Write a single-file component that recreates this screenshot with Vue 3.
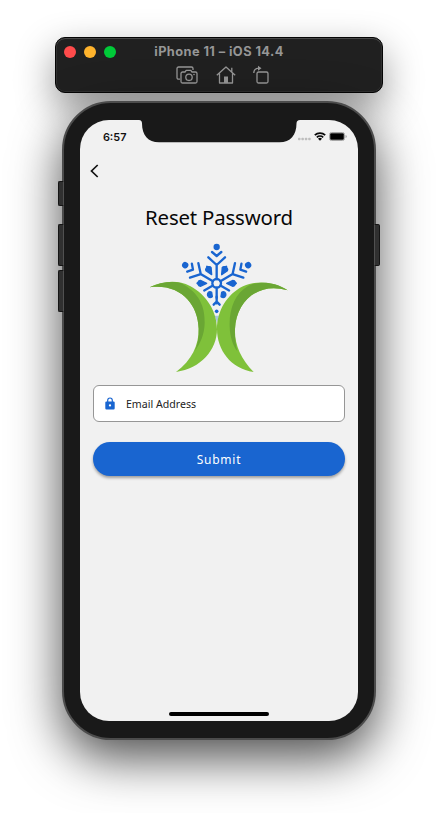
<script setup>
import { ref } from 'vue'

const email = ref('')
const sideArms = [-60, 0, 60]
const shortArms = [-60, 0, 60]
const petals = [30, -30, 90, -90]
</script>

<template>
  <main class="desktop">
    <header class="toolbar">
      <div class="title-row">
        <div class="lights">
          <span class="light red"></span>
          <span class="light amber"></span>
          <span class="light green"></span>
        </div>
        <h1 class="window-title">iPhone 11 – iOS 14.4</h1>
      </div>
      <div class="tools">
        <svg class="tool camera" viewBox="0 0 22 18" width="22" height="18">
          <path d="M4 13.200H2.500A1.500 1.500 0 0 1 1 11.700V2.500A1.500 1.500 0 0 1 2.500 1H15.500A1.500 1.500 0 0 1 17 2.500V4" />
          <path d="M6.500 6H9l1.200-1.600h4.600L16 6h3.500A1.500 1.500 0 0 1 21 7.500v8a1.500 1.500 0 0 1-1.500 1.500h-13A1.500 1.500 0 0 1 5 15.500v-8A1.500 1.500 0 0 1 6.500 6Z" />
          <circle cx="13" cy="11.300" r="3.200" />
          <circle class="solid" cx="18" cy="8.500" r=".8" />
        </svg>
        <svg class="tool home" viewBox="0 0 20 18" width="20" height="18">
          <path d="M.8 9.300 10 1l9.200 8.300M3.500 7.500V17h13V7.500M15.800 6V1.800" />
          <path class="solid" d="M8 10.500h4V17H8z" />
        </svg>
        <svg class="tool rotate" viewBox="0 0 16 18" width="16" height="18">
          <rect x="4" y="6" width="11" height="11" rx="1.500" />
          <path d="M.8 7C.8 4 2.500 2.200 6.500 2.200" />
          <path class="solid" d="M5-.2 8.500 2.300 5 4.800z" />
        </svg>
      </div>
    </header>

    <section class="phone">
      <span class="side mute"></span>
      <span class="side volume-up"></span>
      <span class="side volume-down"></span>
      <span class="side power"></span>

      <div class="screen">
        <svg class="notch" viewBox="0 0 161 23" width="161" height="23">
          <path d="M0 0H161Q157.500 0 157.500 3.500C157.500 15 151.500 22.300 140.500 22.300H20C9 22.300 3 15 3 3.500Q3 0 0 0Z" />
        </svg>

        <div class="status">
          <span class="time">6:57</span>
          <div class="indicators">
            <svg class="signal" viewBox="0 0 13 9" width="13" height="9">
              <rect v-for="n in 4" :key="n" :x="(n - 1) * 3.4" y="5.8" width="2.5" height="2.5" rx=".8" />
            </svg>
            <svg class="wifi" viewBox="0 0 12 9" width="12" height="9">
              <path d="M.8 3.200a7.500 7.500 0 0 1 10.400 0M2.800 5.300a4.700 4.700 0 0 1 6.400 0" />
              <path class="wifi-dot" d="M4 6.700a3 3 0 0 1 4 0L6 8.800z" />
            </svg>
            <svg class="battery" viewBox="0 0 18 9" width="18" height="9">
              <rect class="battery-shell" x=".5" y=".5" width="15" height="8" rx="2" />
              <rect x="1.200" y="1.200" width="13.600" height="6.600" rx="1" />
              <path class="battery-cap" d="M16.500 3q1.300 .3 1.300 1.500t-1.300 1.500z" />
            </svg>
          </div>
        </div>

        <button class="back" aria-label="Back">
          <svg viewBox="0 0 9 14" width="9" height="14"><path d="M7.700 1 1.500 7l6.200 6" /></svg>
        </button>

        <h2 class="heading">Reset Password</h2>

        <svg class="logo" viewBox="0 0 480 435" width="160" height="145">
          <g class="flake" transform="translate(230 145)">
            <circle r="13" />
            <g v-for="angle in sideArms" :key="'a' + angle" :transform="`rotate(${angle})`">
              <path d="M0-13V-57M-25-78 0-55 25-78M-14-94 0-82 14-94" />
              <circle class="fill" cy="-109" r="9.500" />
            </g>
            <g v-for="angle in shortArms" :key="'s' + angle" :transform="`rotate(${angle})`">
              <path d="M0 13V43" />
            </g>
            <path d="M0 40V60M-9 64 0 55 9 64" />
            <path
              v-for="angle in petals"
              :key="'p' + angle"
              class="petal"
              :transform="`rotate(${angle})`"
              d="M0-30-9-49Q-9-54-3-56L0-59 3-56Q9-54 9-49Z"
            />
            <path class="petal" d="M-15 27-13 40Q-20 45-25 40-30 34-25 27-20 23-15 27ZM15 27 13 40Q20 45 25 40 30 34 25 27 20 23 15 27Z" />
            <circle class="fill" cy="84" r="5.500" />
          </g>
          <path class="pale" d="M224 242h13l-6 23z" />
          <path class="leaf" d="M29 157C64 139 112 133 150 153C201 180 231 230 231 283C231 344 183 401 108 411C155 376 177 330 176 281C174 207 121 145 29 157Z" />
          <path class="leaf-shade" d="M29 157C60 141 98 137 122 144C179 173 195 216 194 264C193 299 181 325 165 347C174 326 177 304 176 281C174 207 121 145 29 157Z" />
          <path class="leaf" d="M443 166C407 142 352 134 309 154C260 178 231 229 231 283C231 344 272 402 341 411C302 370 283 327 285 282C288 202 352 139 443 166Z" />
          <path class="leaf-shade" d="M443 166C404 139 356 138 325 152C284 176 267 222 269 275C270 305 279 332 292 348C286 327 284 303 285 282C288 202 352 139 443 166Z" />
        </svg>

        <label class="field">
          <svg viewBox="0 0 10 13" width="10" height="13">
            <path class="shackle" d="M2.700 5V3.300a2.300 2.300 0 0 1 4.600 0V5" />
            <path d="M1.400 4.500h7.200q1.100 0 1.100 1.100v5.600q0 1.200-1.100 1.200H1.400Q.3 12.400.3 11.200V5.600q0-1.100 1.100-1.100Z" />
            <circle class="keyhole" cx="5" cy="8.400" r="1.150" />
          </svg>
          <input v-model="email" type="email" placeholder="Email Address" />
        </label>

        <button class="submit">Submit</button>
        <span class="home-bar"></span>
      </div>
    </section>
  </main>
</template>

<style>
body {
  margin: 0;
  background: #fff;
}
</style>

<style scoped>
.desktop {
  display: flex;
  flex-direction: column;
  align-items: center;
  box-sizing: border-box;
  width: 438px;
  height: 813px;
  padding-top: 37px;
  gap: 8px;
  overflow: hidden;
  background: #fff;
}

.toolbar {
  box-sizing: border-box;
  width: 328px;
  height: 56px;
  flex: none;
  padding-top: 5px;
  border: 1px solid #050505;
  border-radius: 10px;
  background: #202020;
  box-shadow: inset 0 1px 0 #484848, inset 0 0 0 1px #303030, 0 15px 38px rgba(0, 0, 0, 0.42);
}

.title-row {
  display: grid;
  grid-template-columns: 84px 1fr 84px;
  align-items: center;
  height: 17px;
}

.lights {
  display: flex;
  gap: 8px;
  padding-left: 8px;
}

.light {
  width: 12px;
  height: 12px;
  border-radius: 50%;
}

.red { background: #ff4b4b; }
.amber { background: #ffb32c; }
.green { background: #00ca38; }

.window-title {
  margin: 0;
  color: #969696;
  font: 700 12.8px/16px Inter, sans-serif;
  letter-spacing: 0.42px;
  text-align: center;
  white-space: nowrap;
}

.tools {
  display: flex;
  align-items: center;
  padding: 6px 0 0 120px;
}

.tool {
  fill: none;
  stroke: #969696;
  stroke-width: 1.3;
  stroke-linejoin: round;
  overflow: visible;
}

.tool .solid {
  fill: #969696;
  stroke: none;
}

.camera { margin-left: -0.5px; }
.home { margin-left: 18px; }
.rotate { margin-left: 17px; }

.phone {
  position: relative;
  box-sizing: border-box;
  width: 314px;
  height: 639px;
  flex: none;
  padding: 17px 16px;
  border: 2px solid #4c4c4c;
  border-radius: 49px;
  background: #191919;
  box-shadow: 0 18px 50px rgba(0, 0, 0, 0.7);
}

.side {
  position: absolute;
  left: -6px;
  box-sizing: border-box;
  width: 6px;
  border: 1px solid #151515;
  border-right-color: #505050;
  border-radius: 2px 0 0 2px;
  background: #303030;
}

.mute { top: 78px; height: 25px; }
.volume-up { top: 121px; height: 42px; }
.volume-down { top: 167px; height: 42px; }
.power { top: 121px; right: -6px; left: auto; height: 42px; transform: scaleX(-1); }

.screen {
  position: relative;
  display: flex;
  flex-direction: column;
  box-sizing: border-box;
  width: 278px;
  height: 601px;
  padding: 0 13.4px;
  border-radius: 29px;
  background: #f1f1f1;
}

.notch {
  position: absolute;
  top: -0.5px;
  left: 58.5px;
  fill: #191919;
}

.status {
  display: flex;
  align-items: center;
  justify-content: space-between;
  height: 17px;
  margin-top: 8px;
  padding: 0 0 0 9.5px;
}

.time {
  padding-top: 1px;
  color: #111;
  font: 600 10.9px/17px Inter, sans-serif;
}

.indicators {
  display: flex;
  align-items: center;
  gap: 3px;
  margin-right: -2.3px;
}

.indicators svg { flex: none; }
.signal { fill: #bebebe; }

.wifi {
  fill: none;
  stroke: #080808;
  stroke-width: 1.7;
}

.wifi .wifi-dot { fill: #080808; stroke: none; }
.battery .battery-shell { fill: none; stroke: #a6a6a6; }
.battery .battery-cap { fill: #a6a6a6; }

.back {
  display: flex;
  width: 20px;
  height: 20px;
  align-items: center;
  margin: 16px 0 0 -3.4px;
  padding: 0;
  border: 0;
  background: none;
}

.back svg {
  fill: none;
  stroke: #111;
  stroke-width: 1.7;
}

.heading {
  margin: 22px 0 0;
  color: #080808;
  font: 400 20.4px/28px "Noto Sans", sans-serif;
  letter-spacing: -0.18px;
  text-align: center;
}

.logo {
  margin: 4px 0 0 46.6px;
}

.flake {
  fill: none;
  stroke: #1965d0;
  stroke-width: 7;
  stroke-linecap: round;
  stroke-linejoin: round;
}

.flake .fill { fill: #1965d0; stroke: none; }
.flake .petal { fill: #1965d0; stroke-width: 4; }
.pale { fill: #a8c9dc; }
.leaf { fill: #7fc13a; }
.leaf-shade { fill: #6aa634; }

.field {
  display: flex;
  align-items: center;
  box-sizing: border-box;
  height: 37px;
  flex: none;
  margin-top: 5px;
  padding: 0 11px 0 10.6px;
  border: 1px solid #969696;
  border-radius: 6px;
  background: #fff;
}

.field svg { flex: none; fill: #1965d0; }
.field .shackle { fill: none; stroke: #1965d0; stroke-width: 1.2; }
.field .keyhole { fill: #fff; }

.field input {
  min-width: 0;
  flex: 1;
  margin-left: 11px;
  padding: 0;
  border: 0;
  outline: 0;
  background: transparent;
  font: 400 10.6px/18px "Noto Sans", sans-serif;
}

.field input::placeholder { color: #222; opacity: 1; }

.submit {
  height: 34px;
  flex: none;
  margin-top: 20px;
  padding: 1px 0 0;
  border: 0;
  border-radius: 17px;
  background: #1965d0;
  color: #fff;
  font: 400 12px/33px "Noto Sans", sans-serif;
  letter-spacing: 0.75px;
  box-shadow: 0 2px 3px rgba(0, 0, 0, 0.35);
}

.home-bar {
  width: 100px;
  height: 4px;
  margin: auto auto 5px;
  border-radius: 2px;
  background: #000;
}
</style>
